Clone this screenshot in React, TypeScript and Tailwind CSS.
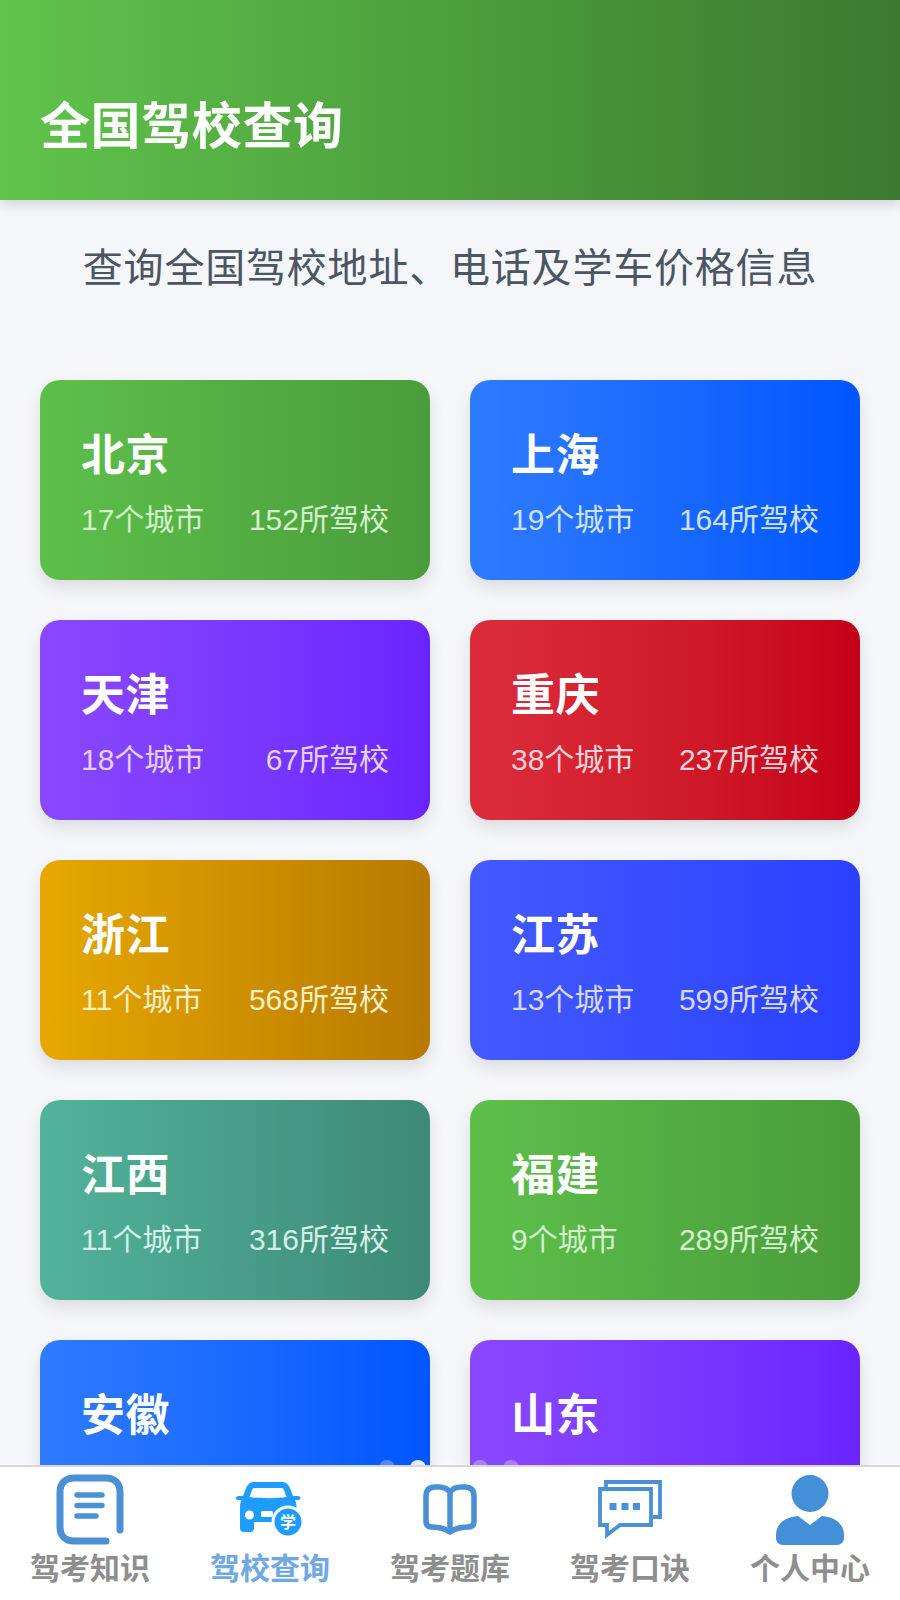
const cards = [
  { name: '北京', cities: '17个城市', schools: '152所驾校', bg: 'from-[#5dc04a] to-[#4a9c3b]', sub: 'text-[#d2f0cc]' },
  { name: '上海', cities: '19个城市', schools: '164所驾校', bg: 'from-[#2f7bff] to-[#0056ff]', sub: 'text-[#cfe0ff]' },
  { name: '天津', cities: '18个城市', schools: '67所驾校', bg: 'from-[#8b47ff] to-[#6a24ff]', sub: 'text-[#e2d2ff]' },
  { name: '重庆', cities: '38个城市', schools: '237所驾校', bg: 'from-[#dc2c3c] to-[#c50018]', sub: 'text-[#f8d3d6]' },
  { name: '浙江', cities: '11个城市', schools: '568所驾校', bg: 'from-[#e6a800] to-[#b87900]', sub: 'text-[#fbeec4]' },
  { name: '江苏', cities: '13个城市', schools: '599所驾校', bg: 'from-[#4459ff] to-[#2a40ff]', sub: 'text-[#d3d9ff]' },
  { name: '江西', cities: '11个城市', schools: '316所驾校', bg: 'from-[#52b39a] to-[#3d8a76]', sub: 'text-[#d4efe7]' },
  { name: '福建', cities: '9个城市', schools: '289所驾校', bg: 'from-[#5dc04a] to-[#4a9c3b]', sub: 'text-[#d2f0cc]' },
  { name: '安徽', cities: '', schools: '', bg: 'from-[#2f7bff] to-[#0056ff]', sub: 'text-[#cfe0ff]' },
  { name: '山东', cities: '', schools: '', bg: 'from-[#8b47ff] to-[#6a24ff]', sub: 'text-[#e2d2ff]' },
]

function NotesIcon() {
  return (
    <svg width="68" height="72" viewBox="0 0 68 72" fill="none" stroke="#4a90d6" strokeLinecap="round">
      <path d="M50 67H18C9.5 67 4 61.5 4 53V18C4 9.5 9.5 4 18 4H50C58.5 4 64 9.5 64 18V56" strokeWidth="7" />
      <path d="M21 21H46M21 31.5H46M21 42H40" strokeWidth="5.5" />
    </svg>
  )
}

function CarIcon() {
  return (
    <svg width="68" height="56" viewBox="0 0 68 56">
      <path
        fill="#1e9cff"
        d="M18 0H46C49.5 0 52 2 53.5 5L57 14H62C63.5 14 64.5 15 64.5 16C64.5 17 63.5 18 62 18H59C60 20 60.5 22 60.5 25V40H18V46C18 48.5 16.5 50 14 50H8C5.500 50 4 48.5 4 46V25C4 22 4.500 20 5.500 18H2.500C1 18 0 17 0 16C0 15 1 14 2.500 14H7L10.500 5C12 2 14.500 0 18 0Z"
      />
      <path fill="#fff" d="M18.500 6H45.500C46.500 6 47.500 6.500 48 8L50.500 15C42 16.500 22 16.500 13.500 15L16 8C16.500 6.500 17.500 6 18.500 6Z" />
      <circle cx="13.500" cy="33" r="4.500" fill="#fff" />
      <rect x="25" y="29" width="12" height="6" rx="1.500" fill="#fff" />
      <circle cx="52" cy="40" r="16.500" fill="#fff" />
      <circle cx="52" cy="40" r="13.500" fill="#1e9cff" />
      <text x="52" y="46" textAnchor="middle" fontSize="16" fontWeight="700" fill="#fff" fontFamily="'Noto Sans CJK SC', sans-serif">
        学
      </text>
    </svg>
  )
}

function BookIcon() {
  return (
    <svg width="54" height="52" viewBox="0 0 54 52" fill="none" stroke="#4a90d6" strokeWidth="5.5" strokeLinejoin="round">
      <path d="M27 8C24 4 20 3 16 3H12C6 3 3 6 3 12V37C3 41 5 43 9 43C15 43 21 44 27 48C33 44 39 43 45 43C49 43 51 41 51 37V12C51 6 48 3 42 3H38C34 3 30 4 27 8Z" />
      <path d="M27 8V48" />
    </svg>
  )
}

function ChatIcon() {
  return (
    <svg width="64" height="60" viewBox="0 0 64 60" fill="none" stroke="#4a90d6" strokeWidth="3.8">
      <path d="M8 7V2H62V37H55" />
      <path d="M2 9H53V45H22L9 55V45H2Z" />
      <g fill="#4a90d6" stroke="none">
        <rect x="11.500" y="23" width="7" height="7" />
        <rect x="23.500" y="23" width="7" height="7" />
        <rect x="35" y="23" width="7" height="7" />
      </g>
    </svg>
  )
}

function UserIcon() {
  return (
    <svg width="68" height="70" viewBox="0 0 68 70" fill="#4390d8">
      <circle cx="34" cy="18.500" r="18.500" />
      <path d="M22 41L34 50L46 41C59 42 68 49 68 60V63C68 67 65 70 61 70H7C3 70 0 67 0 63V60C0 49 9 42 22 41Z" />
    </svg>
  )
}

const tabs = [
  { label: '驾考知识', icon: <NotesIcon />, active: false },
  { label: '驾校查询', icon: <CarIcon />, active: true },
  { label: '驾考题库', icon: <BookIcon />, active: false },
  { label: '驾考口诀', icon: <ChatIcon />, active: false },
  { label: '个人中心', icon: <UserIcon />, active: false },
]

export default function App() {
  return (
    <div className="relative flex h-[1600px] w-[900px] flex-col overflow-hidden bg-[#f4f6f9] font-['Liberation_Sans','Noto_Sans_CJK_SC',sans-serif]">
      {/* Header */}
      <div className="z-10 flex h-[200px] shrink-0 items-end bg-linear-to-r from-[#60c44b] to-[#3b7a30] px-[40px] pb-[38px] shadow-[0_4px_12px_rgba(0,0,0,0.15)]">
        <h1 className="text-[50px] leading-[70px] font-bold tracking-[0.6px] text-white">全国驾校查询</h1>
      </div>

      <p className="mt-[40px] text-center text-[40px] leading-[56px] tracking-[0.8px] text-[#4b5563]">查询全国驾校地址、电话及学车价格信息</p>

      {/* Province cards */}
      <div className="mt-[84px] grid grid-cols-2 gap-[40px] px-[40px]">
        {cards.map((c) => (
          <div
            key={c.name}
            className={`h-[200px] rounded-[20px] bg-linear-to-r px-[41px] pt-[45px] shadow-[0_8px_16px_rgba(0,0,0,0.1)] ${c.bg}`}
          >
            <h2 className="text-[44px] leading-[62px] font-bold tracking-[0.5px] text-white">{c.name}</h2>
            <div className={`mt-[12px] flex justify-between text-[30px] leading-[42px] ${c.sub}`}>
              <span>{c.cities}</span>
              <span>{c.schools}</span>
            </div>
          </div>
        ))}
      </div>

      {/* Swiper dots */}
      <div className="absolute top-[1460px] left-[379px] flex gap-[15px]">
        <span className="h-[16px] w-[16px] rounded-full bg-white/30" />
        <span className="h-[16px] w-[16px] rounded-full bg-white/90" />
        <span className="h-[16px] w-[16px] rounded-full bg-white/30" />
        <span className="h-[16px] w-[16px] rounded-full bg-white/30" />
        <span className="h-[16px] w-[16px] rounded-full bg-white/30" />
      </div>

      {/* Bottom tabs */}
      <div className="absolute inset-x-0 top-[1465px] z-10 grid h-[135px] grid-cols-5 border-t-2 border-[#d5d7db] bg-white">
        {tabs.map((t) => (
          <div key={t.label} className="flex flex-col items-center">
            <div className="flex h-[80px] items-center justify-center pt-[6px]">{t.icon}</div>
            <span className={`mt-[1px] text-[30px] leading-[42px] font-bold ${t.active ? 'text-[#6fa8e6]' : 'text-[#8e8e8e]'}`}>
              {t.label}
            </span>
          </div>
        ))}
      </div>
    </div>
  )
}
